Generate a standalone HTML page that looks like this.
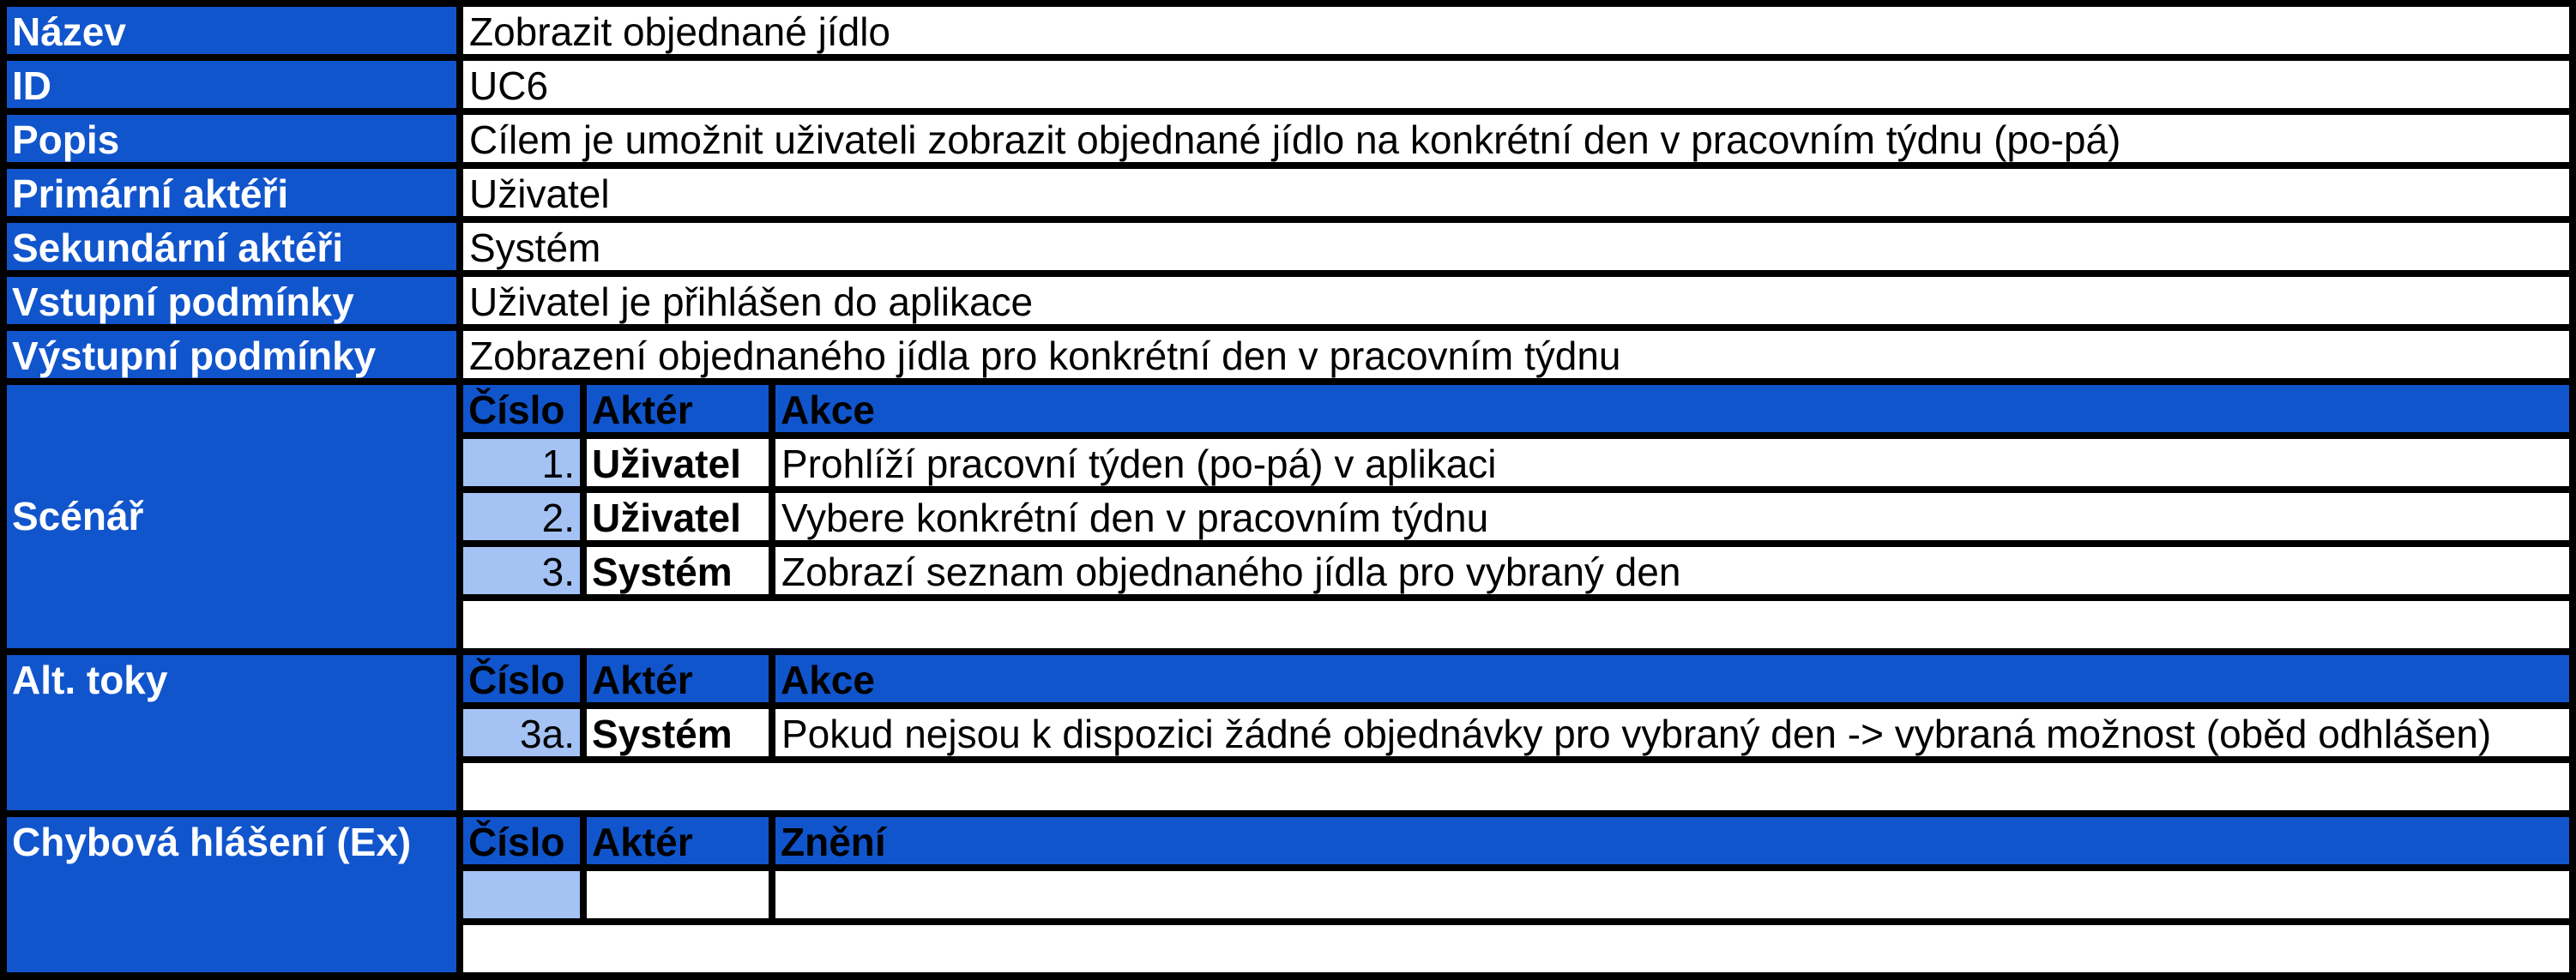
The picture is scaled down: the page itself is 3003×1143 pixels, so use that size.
<!DOCTYPE html>
<html><head><meta charset="utf-8"><style>
html,body{margin:0;padding:0;background:#000;}
body{width:3003px;height:1143px;position:relative;overflow:hidden;font-family:"Liberation Sans",Arial,sans-serif;font-size:46px;}
.c{position:absolute;box-sizing:border-box;height:55px;line-height:52px;padding-top:3px;white-space:nowrap;overflow:hidden;}
.b{background:#1155CC;color:#fff;font-weight:bold;padding-left:6px;}
.w{background:#fff;color:#000;padding-left:7px;}
.h{background:#1155CC;color:#000;font-weight:bold;padding-left:6px;}
.n{background:#A4C2F4;color:#000;text-align:right;padding-right:6px;}
.a{background:#fff;color:#000;font-weight:bold;padding-left:6px;}
</style></head><body>
<div class="c b" style="left:8px;top:8px;width:524px">Název</div>
<div class="c w" style="left:540px;top:8px;width:2455px">Zobrazit objednané jídlo</div>
<div class="c b" style="left:8px;top:71px;width:524px">ID</div>
<div class="c w" style="left:540px;top:71px;width:2455px">UC6</div>
<div class="c b" style="left:8px;top:134px;width:524px">Popis</div>
<div class="c w" style="left:540px;top:134px;width:2455px">Cílem je umožnit uživateli zobrazit objednané jídlo na konkrétní den v pracovním týdnu (po-pá)</div>
<div class="c b" style="left:8px;top:197px;width:524px">Primární aktéři</div>
<div class="c w" style="left:540px;top:197px;width:2455px">Uživatel</div>
<div class="c b" style="left:8px;top:260px;width:524px">Sekundární aktéři</div>
<div class="c w" style="left:540px;top:260px;width:2455px">Systém</div>
<div class="c b" style="left:8px;top:323px;width:524px">Vstupní podmínky</div>
<div class="c w" style="left:540px;top:323px;width:2455px">Uživatel je přihlášen do aplikace</div>
<div class="c b" style="left:8px;top:386px;width:524px">Výstupní podmínky</div>
<div class="c w" style="left:540px;top:386px;width:2455px">Zobrazení objednaného jídla pro konkrétní den v pracovním týdnu</div>

<div class="c b" style="left:8px;top:449px;width:524px;height:307px;line-height:307px;padding-top:0">Scénář</div>
<div class="c h" style="left:540px;top:449px;width:136px">Číslo</div>
<div class="c h" style="left:684px;top:449px;width:212px">Aktér</div>
<div class="c h" style="left:904px;top:449px;width:2091px">Akce</div>
<div class="c n" style="left:540px;top:512px;width:136px">1.</div>
<div class="c a" style="left:684px;top:512px;width:212px">Uživatel</div>
<div class="c w" style="left:904px;top:512px;width:2091px">Prohlíží pracovní týden (po-pá) v aplikaci</div>
<div class="c n" style="left:540px;top:575px;width:136px">2.</div>
<div class="c a" style="left:684px;top:575px;width:212px">Uživatel</div>
<div class="c w" style="left:904px;top:575px;width:2091px">Vybere konkrétní den v pracovním týdnu</div>
<div class="c n" style="left:540px;top:638px;width:136px">3.</div>
<div class="c a" style="left:684px;top:638px;width:212px">Systém</div>
<div class="c w" style="left:904px;top:638px;width:2091px">Zobrazí seznam objednaného jídla pro vybraný den</div>
<div class="c w" style="left:540px;top:701px;width:2455px"></div>

<div class="c b" style="left:8px;top:764px;width:524px;height:181px">Alt. toky</div>
<div class="c h" style="left:540px;top:764px;width:136px">Číslo</div>
<div class="c h" style="left:684px;top:764px;width:212px">Aktér</div>
<div class="c h" style="left:904px;top:764px;width:2091px">Akce</div>
<div class="c n" style="left:540px;top:827px;width:136px">3a.</div>
<div class="c a" style="left:684px;top:827px;width:212px">Systém</div>
<div class="c w" style="left:904px;top:827px;width:2091px">Pokud nejsou k dispozici žádné objednávky pro vybraný den -&gt; vybraná možnost (oběd odhlášen)</div>
<div class="c w" style="left:540px;top:890px;width:2455px"></div>

<div class="c b" style="left:8px;top:953px;width:524px;height:181px">Chybová hlášení (Ex)</div>
<div class="c h" style="left:540px;top:953px;width:136px">Číslo</div>
<div class="c h" style="left:684px;top:953px;width:212px">Aktér</div>
<div class="c h" style="left:904px;top:953px;width:2091px">Znění</div>
<div class="c n" style="left:540px;top:1016px;width:136px"></div>
<div class="c a" style="left:684px;top:1016px;width:212px"></div>
<div class="c w" style="left:904px;top:1016px;width:2091px"></div>
<div class="c w" style="left:540px;top:1079px;width:2455px"></div>
</body></html>
